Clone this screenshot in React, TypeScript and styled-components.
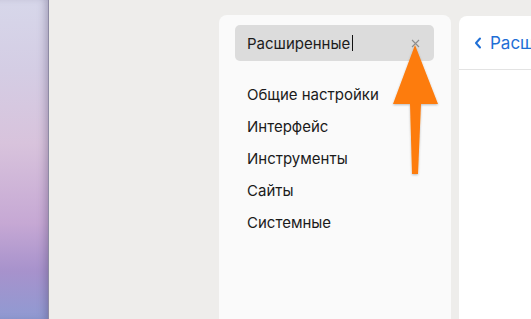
import React from 'react';
import styled, { createGlobalStyle } from 'styled-components';

const Global = createGlobalStyle`
  html, body { margin: 0; padding: 0; }
  body {
    font-family: Inter, "Noto Sans", "Liberation Sans", sans-serif;
    -webkit-font-smoothing: antialiased;
  }
`;

const Screen = styled.div`
  position: relative;
  display: flex;
  width: 531px;
  height: 319px;
  overflow: hidden;
`;

const Wallpaper = styled.div`
  width: 48px;
  flex-shrink: 0;
  background: linear-gradient(180deg, #d7d7ea 0%, #d4cde4 22%, #d8c3dc 45%, #c6a8d4 70%, #a792cc 85%, #8f9ad2 100%);
  box-shadow: inset -6px 0 8px -4px rgba(60, 50, 90, 0.35);
  border-right: 1px solid #8d8aa3;
`;

const Window = styled.div`
  flex: 1;
  display: flex;
  gap: 8px;
  background: #eeedeb;
  padding: 15px 0 0 170px;
  overflow: hidden;
`;

const Sidebar = styled.div`
  width: 232px;
  flex-shrink: 0;
  background: #fafafa;
  border-radius: 8px 8px 0 0;
  padding: 10px 17px 0 16px;
  box-sizing: border-box;
`;

const SearchField = styled.div`
  display: flex;
  align-items: center;
  height: 36px;
  background: #dcdcdc;
  border-radius: 5px;
  padding: 0 14px 0 12px;
  font-size: 15px;
  color: #1b1b1b;
`;

const Caret = styled.span`
  display: inline-block;
  width: 1px;
  height: 16px;
  background: #111;
  margin-left: 2px;
`;

const Spacer = styled.div`
  flex: 1;
`;

const List = styled.ul`
  list-style: none;
  margin: 18px 0 0;
  padding: 0 0 0 12px;
`;

const Item = styled.li`
  height: 32px;
  line-height: 32px;
  font-size: 15px;
  color: #1b1b1b;
`;

const Main = styled.div`
  width: 300px;
  flex-shrink: 0;
  margin-top: 1px;
  background: #fff;
  border-radius: 8px 0 0 0;
`;

const MainHeader = styled.div`
  display: flex;
  align-items: center;
  gap: 8px;
  height: 53px;
  padding-left: 15px;
  border-bottom: 1px solid #e3e3e3;
  color: #1f6fd6;
  font-size: 17px;
`;

const Overlay = styled.svg`
  position: absolute;
  left: 0;
  top: 0;
  pointer-events: none;
`;

const items = ['Общие настройки', 'Интерфейс', 'Инструменты', 'Сайты', 'Системные'];

export default function App() {
  return (
    <Screen>
      <Global />
      <Wallpaper />
      <Window>
        <Sidebar>
          <SearchField>
            Расширенные<Caret />
            <Spacer />
            <svg width="9" height="9" viewBox="0 0 9 9">
              <path d="M1 1L8 8M8 1L1 8" stroke="#8e8e8e" strokeWidth="1.1" />
            </svg>
          </SearchField>
          <List>
            {items.map((t) => (
              <Item key={t}>{t}</Item>
            ))}
          </List>
        </Sidebar>
        <Main>
          <MainHeader>
            <svg width="8" height="12" viewBox="0 0 8 12">
              <path d="M6 1.5L2 6l4 4.5" fill="none" stroke="#1f6fd6" strokeWidth="2" strokeLinecap="round" strokeLinejoin="round" />
            </svg>
            Расширенные
          </MainHeader>
        </Main>
      </Window>
      <Overlay width="531" height="319" viewBox="0 0 531 319">
        <defs>
          <filter id="sh" x="-30%" y="-10%" width="160%" height="130%">
            <feDropShadow dx="0" dy="1" stdDeviation="1.2" floodColor="#000" floodOpacity="0.25" />
          </filter>
        </defs>
        <polygon
          points="415,45 438,104 421,104 418,174 412,174 410,104 393,104"
          fill="#fd7b0b"
          filter="url(#sh)"
        />
      </Overlay>
    </Screen>
  );
}
